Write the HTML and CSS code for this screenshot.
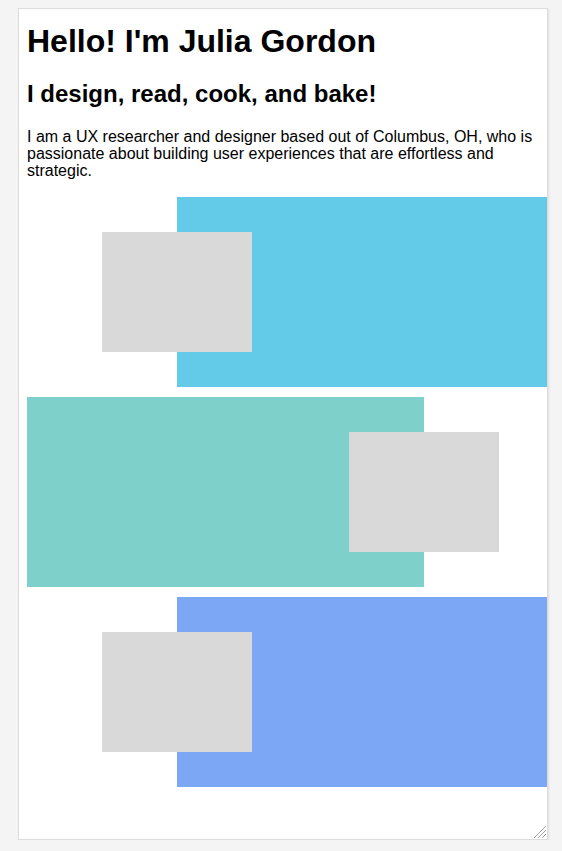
FILE: index.html
```
<!DOCTYPE html>
<html lang="en">
<head>
<meta charset="utf-8">
<title>Julia Gordon</title>
<link rel="stylesheet" href="styles.css">
</head>
<body>
<div class="frame">
  <div class="page">
    <h1 class="title">Hello! I'm Julia Gordon</h1>
    <h2 class="subtitle">I design, read, cook, and bake!</h2>
    <p class="intro">I am a UX researcher and designer based out of Columbus, OH, who is passionate about building user experiences that are effortless and strategic.</p>
    <div class="projects">
      <div class="project project-right">
        <div class="block block-blue"></div>
        <div class="thumb"></div>
      </div>
      <div class="project project-left">
        <div class="block block-teal"></div>
        <div class="thumb"></div>
      </div>
      <div class="project project-right">
        <div class="block block-indigo"></div>
        <div class="thumb"></div>
      </div>
    </div>
  </div>
  <svg class="grip" width="13" height="13" viewBox="0 0 13 13">
    <line x1="1" y1="13" x2="13" y2="1" stroke="#a0a0a0" stroke-width="1"/>
    <line x1="5" y1="13" x2="13" y2="5" stroke="#a0a0a0" stroke-width="1"/>
    <line x1="9" y1="13" x2="13" y2="9" stroke="#a0a0a0" stroke-width="1"/>
  </svg>
</div>
</body>
</html>
```
FILE: styles.css
```
html, body {
  margin: 0;
  padding: 0;
}
body {
  background: #f4f4f4;
  font-family: "Liberation Sans", Arial, sans-serif;
  color: #000;
}
.frame {
  position: relative;
  box-sizing: border-box;
  margin: 8px 0 0 18px;
  width: 530px;
  height: 832px;
  background: #fff;
  border: 1px solid #dcdcdc;
  box-shadow: 1px 1px 2px rgba(0, 0, 0, 0.08);
  overflow: hidden;
}
.page {
  padding: 14px 8px 8px;
}
.title {
  margin: 0 0 20px;
  font-size: 32px;
  line-height: 37px;
  font-weight: bold;
}
.subtitle {
  margin: 0 0 20px;
  font-size: 24px;
  line-height: 28px;
  font-weight: bold;
}
.intro {
  margin: 0 0 18px;
  font-size: 16px;
  line-height: 17px;
}
.projects {
  display: flex;
  flex-direction: column;
  gap: 10px;
}
.project {
  display: grid;
  grid-template-columns: 1fr;
  grid-template-rows: 190px;
}
.block,
.thumb {
  grid-area: 1 / 1;
}
.block {
  height: 190px;
}
.thumb {
  z-index: 1;
  width: 150px;
  height: 120px;
  margin-top: 35px;
  background: #d9d9d9;
}
.project-right .block {
  margin-left: 150px;
  width: 370px;
}
.project-right .thumb {
  margin-left: 75px;
}
.project-left .block {
  width: 397px;
}
.project-left .thumb {
  margin-left: 322px;
}
.block-blue {
  background: #63cbe8;
}
.block-teal {
  background: #7ed0ca;
}
.block-indigo {
  background: #7ba7f5;
}
.grip {
  position: absolute;
  right: 1px;
  bottom: 1px;
}
```
